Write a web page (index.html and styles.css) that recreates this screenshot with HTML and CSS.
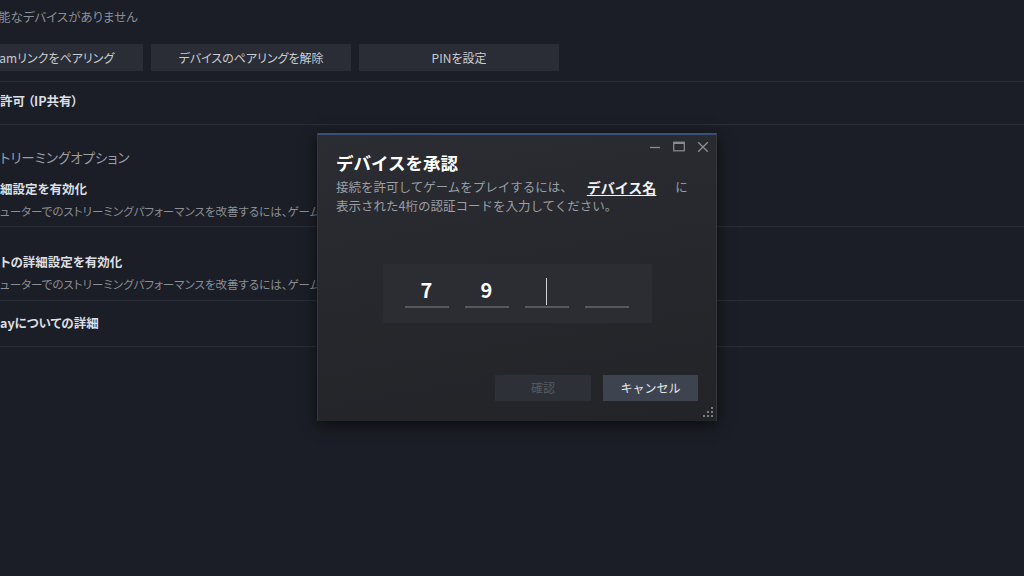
FILE: index.html
```html
<!DOCTYPE html>
<html lang="ja">
<head>
<meta charset="utf-8">
<title>デバイスを承認</title>
<link rel="stylesheet" href="styles.css">
</head>
<body>
<div class="page">
  <div class="note">能なデバイスがありません</div>
  <div class="btnrow">
    <div class="btn btn-first">Steamリンクをペアリング</div>
    <div class="btn">デバイスのペアリングを解除</div>
    <div class="btn">PINを設定</div>
  </div>
  <div class="row row-ip"><div class="rtitle">許可 （IP共有）</div></div>
  <div class="section">トリーミングオプション</div>
  <div class="row row-a">
    <div class="rtitle">細設定を有効化</div>
    <div class="rsub">ューターでのストリーミングパフォーマンスを改善するには、ゲーム</div>
  </div>
  <div class="row row-b">
    <div class="rtitle">トの詳細設定を有効化</div>
    <div class="rsub">ューターでのストリーミングパフォーマンスを改善するには、ゲーム</div>
  </div>
  <div class="row row-c"><div class="rtitle">ayについての詳細</div></div>
</div>

<div class="dialog">
  <div class="controls">
    <svg class="ctl" width="12" height="12" viewBox="0 0 12 12"><path d="M1 6.5H11" stroke="#8b8e94" stroke-width="1.3"/></svg>
    <svg class="ctl" width="12" height="12" viewBox="0 0 12 12"><rect x="0.7" y="1.2" width="10.6" height="8.6" fill="none" stroke="#8b8e94" stroke-width="1.2"/><path d="M0.7 2.2H11.3" stroke="#8b8e94" stroke-width="1.6"/></svg>
    <svg class="ctl" width="12" height="12" viewBox="0 0 12 12"><path d="M1.2 1.2L10.8 10.8M10.8 1.2L1.2 10.8" stroke="#8b8e94" stroke-width="1.3"/></svg>
  </div>
  <div class="dtitle">デバイスを承認</div>
  <div class="ddesc">接続を許可してゲームをプレイするには、<span class="dname">デバイス名</span>に<br>表示された4桁の認証コードを入力してください。</div>
  <div class="codebox">
    <div class="slot">7</div>
    <div class="slot">9</div>
    <div class="slot"><span class="caret"></span></div>
    <div class="slot"></div>
  </div>
  <div class="actions">
    <div class="abtn abtn-dis">確認</div>
    <div class="abtn abtn-cancel">キャンセル</div>
  </div>
  <svg class="grip" width="12" height="12" viewBox="0 0 12 12">
    <rect x="9" y="1" width="2" height="2" fill="#7a7d83"/>
    <rect x="5" y="5" width="2" height="2" fill="#7a7d83"/>
    <rect x="9" y="5" width="2" height="2" fill="#7a7d83"/>
    <rect x="1" y="9" width="2" height="2" fill="#7a7d83"/>
    <rect x="5" y="9" width="2" height="2" fill="#7a7d83"/>
    <rect x="9" y="9" width="2" height="2" fill="#7a7d83"/>
  </svg>
</div>
</body>
</html>
```

FILE: styles.css
```css
html, body {
  margin: 0;
  padding: 0;
  background: #1b1e26;
  width: 1024px;
  height: 576px;
  overflow: hidden;
  font-family: "Noto Sans CJK JP", "Noto Sans", sans-serif;
}

.page {
  padding-top: 7px;
  white-space: nowrap;
  font-feature-settings: "palt";
}

.note {
  font-size: 12.5px;
  line-height: 20px;
  color: #8a8e96;
  margin-left: -2px;
}

.btnrow {
  display: flex;
  gap: 8px;
  margin-top: 17px;
  padding-bottom: 10px;
  border-bottom: 1px solid #2a2e37;
}

.btn {
  width: 200px;
  height: 27px;
  flex: none;
  box-sizing: border-box;
  background: #2a2d35;
  color: #c9ccd1;
  font-size: 12px;
  line-height: 27px;
  text-align: center;
}

.btn-first {
  margin-left: -57px;
  padding-left: 10px;
}

.row {
  border-bottom: 1px solid #2a2e37;
}

.rtitle {
  font-size: 12.5px;
  line-height: 20px;
  font-weight: 700;
  color: #dcdfe3;
}

.rsub {
  font-size: 11.5px;
  line-height: 20px;
  color: #8a8e95;
  margin-top: 2px;
}

.row-ip {
  padding: 9px 0 13px;
}

.section {
  margin-top: 22px;
  font-size: 13.5px;
  line-height: 20px;
  color: #999da4;
}

.row-a {
  padding: 12px 0 5px;
}

.row-b {
  padding: 25px 0 6px;
}

.row-c {
  padding: 12px 0 13px;
}

/* dialog */
.dialog {
  position: absolute;
  left: 317px;
  top: 133px;
  width: 398px;
  height: 286px;
  border-top: 2px solid #38507a;
  border-left: 1px solid #34373d;
  border-right: 1px solid #34373d;
  background: linear-gradient(170deg, #2b2d32 0%, #26282d 45%, #222428 100%);
  box-shadow: 0 4px 14px rgba(0, 0, 0, 0.6);
  white-space: nowrap;
}

.controls {
  display: flex;
  justify-content: flex-end;
  gap: 12px;
  height: 11px;
  padding: 6px 7px 0 0;
}

.ctl {
  display: block;
}

.dtitle {
  padding-left: 18px;
  font-size: 17.5px;
  line-height: 22px;
  font-weight: 700;
  color: #ffffff;
}

.ddesc {
  margin-top: 3px;
  padding-left: 18px;
  font-size: 12.5px;
  line-height: 19px;
  color: #9a9ea5;
}

.dname {
  display: inline-block;
  margin: 0 19px 0 14px;
  font-size: 14px;
  line-height: 18px;
  font-weight: 700;
  color: #f2f3f5;
  text-decoration: underline;
  text-underline-offset: 2px;
  vertical-align: -1px;
}

.codebox {
  width: 269px;
  height: 59px;
  margin: 49px auto 0;
  box-sizing: border-box;
  padding: 10px 23px 0 22px;
  background: #2b2d32;
  display: flex;
  gap: 16px;
}

.slot {
  width: 44px;
  height: 32px;
  border-bottom: 2px solid #55585e;
  font-size: 20px;
  font-weight: 700;
  line-height: 32px;
  color: #ffffff;
  display: flex;
  justify-content: center;
  align-items: center;
}

.caret {
  display: block;
  width: 1px;
  height: 27px;
  background: #cfd2d6;
  margin-top: 2px;
}

.actions {
  display: flex;
  justify-content: flex-end;
  gap: 12px;
  margin-top: 52px;
  padding-right: 18px;
}

.abtn {
  height: 26px;
  line-height: 26px;
  font-size: 12px;
  text-align: center;
}

.abtn-dis {
  width: 96px;
  background: #2d3037;
  color: #565a62;
}

.abtn-cancel {
  width: 95px;
  background: #3d4450;
  color: #e3e6ea;
}

.grip {
  position: absolute;
  right: 2px;
  bottom: 3px;
}
```
